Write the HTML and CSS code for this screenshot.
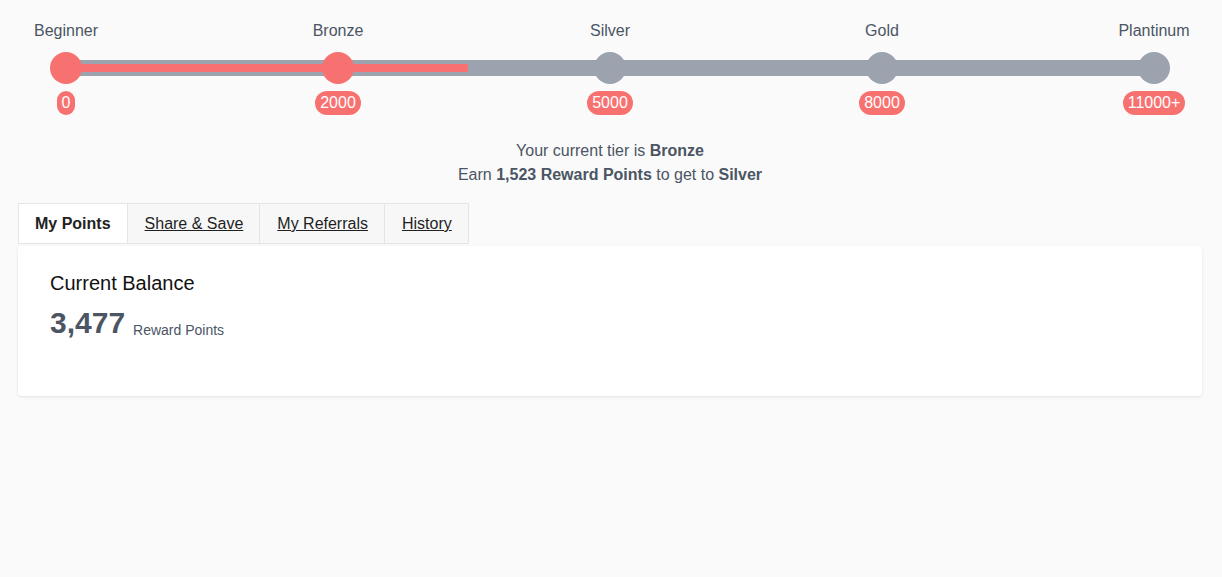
FILE: index.html
```html
<!DOCTYPE html>
<html lang="en">
<head>
<meta charset="utf-8">
<title>Rewards</title>
<link rel="stylesheet" href="styles.css">
</head>
<body>
<div class="page">
  <div class="stepper">
    <div class="track"><div class="track-fill" style="width:402px"></div></div>
    <div class="step done">
      <div class="step-label">Beginner</div>
      <div class="step-dot"></div>
      <div class="step-badge">0</div>
    </div>
    <div class="step done">
      <div class="step-label">Bronze</div>
      <div class="step-dot"></div>
      <div class="step-badge">2000</div>
    </div>
    <div class="step">
      <div class="step-label">Silver</div>
      <div class="step-dot"></div>
      <div class="step-badge">5000</div>
    </div>
    <div class="step">
      <div class="step-label">Gold</div>
      <div class="step-dot"></div>
      <div class="step-badge">8000</div>
    </div>
    <div class="step">
      <div class="step-label">Plantinum</div>
      <div class="step-dot"></div>
      <div class="step-badge">11000+</div>
    </div>
  </div>

  <div class="tier-info">
    <p>Your current tier is <strong>Bronze</strong></p>
    <p>Earn <strong>1,523 Reward Points</strong> to get to <strong>Silver</strong></p>
  </div>

  <div class="tabs">
    <span class="tab active">My Points</span>
    <a class="tab" href="#">Share &amp; Save</a>
    <a class="tab" href="#">My Referrals</a>
    <a class="tab" href="#">History</a>
  </div>

  <div class="card">
    <h2 class="card-title">Current Balance</h2>
    <div class="balance">
      <span class="balance-num">3,477</span>
      <span class="balance-unit">Reward Points</span>
    </div>
  </div>
</div>
</body>
</html>
```

FILE: styles.css
```css
* { box-sizing: border-box; }

html, body {
  margin: 0;
  padding: 0;
  background: #fafafa;
  font-family: "Liberation Sans", Arial, sans-serif;
  color: #4b5563;
}

.page {
  padding: 19px 20px 18px 18px;
}

.stepper {
  position: relative;
  display: flex;
  justify-content: space-between;
  margin: 0 32px;
}

.track {
  position: absolute;
  top: 41px;
  left: 16px;
  right: 16px;
  height: 16px;
  background: #9ca3af;
}

.track-fill {
  position: absolute;
  top: 4px;
  left: 0;
  height: 8px;
  background: #f87171;
}

.step {
  position: relative;
  width: 32px;
  display: flex;
  flex-direction: column;
  align-items: center;
}

.step-label {
  font-size: 16px;
  line-height: 24px;
  white-space: nowrap;
  color: #4b5563;
  margin-bottom: 9px;
}

.step-dot {
  width: 32px;
  height: 32px;
  border-radius: 50%;
  background: #9ca3af;
}

.step.done .step-dot {
  background: #f87171;
}

.step-badge {
  margin-top: 7px;
  height: 24px;
  line-height: 24px;
  padding: 0 5px;
  border-radius: 12px;
  background: #f87171;
  color: #fff;
  font-size: 16px;
  white-space: nowrap;
}

.tier-info {
  margin-top: 24px;
  text-align: center;
  font-size: 16px;
  line-height: 24px;
  color: #4b5563;
}

.tier-info p {
  margin: 0;
}

.tier-info strong {
  font-weight: bold;
}

.tabs {
  display: flex;
  margin-top: 16px;
}

.tab {
  display: block;
  padding: 8px 16px;
  font-size: 16px;
  line-height: 23px;
  color: #1f1f1f;
  background: #f7f7f7;
  border: 1px solid #e5e5e5;
  text-decoration: underline;
}

.tab + .tab {
  border-left: none;
  padding-left: 17px;
}

.tab.active {
  background: #fff;
  font-weight: bold;
  text-decoration: none;
  color: #222;
}

.card {
  margin-top: 2px;
  background: #fff;
  border-radius: 4px;
  box-shadow: 0 1px 3px rgba(0, 0, 0, 0.1);
  padding: 23px 32px 55px;
}

.card-title {
  margin: 0;
  font-size: 20px;
  line-height: 28px;
  font-weight: normal;
  color: #111;
}

.balance {
  display: flex;
  align-items: flex-end;
  gap: 8px;
  margin-top: 8px;
}

.balance-num {
  font-size: 30px;
  line-height: 36px;
  font-weight: bold;
  color: #4b5563;
}

.balance-unit {
  font-size: 14px;
  line-height: 16px;
  padding-bottom: 3px;
  color: #4b5563;
}
```
